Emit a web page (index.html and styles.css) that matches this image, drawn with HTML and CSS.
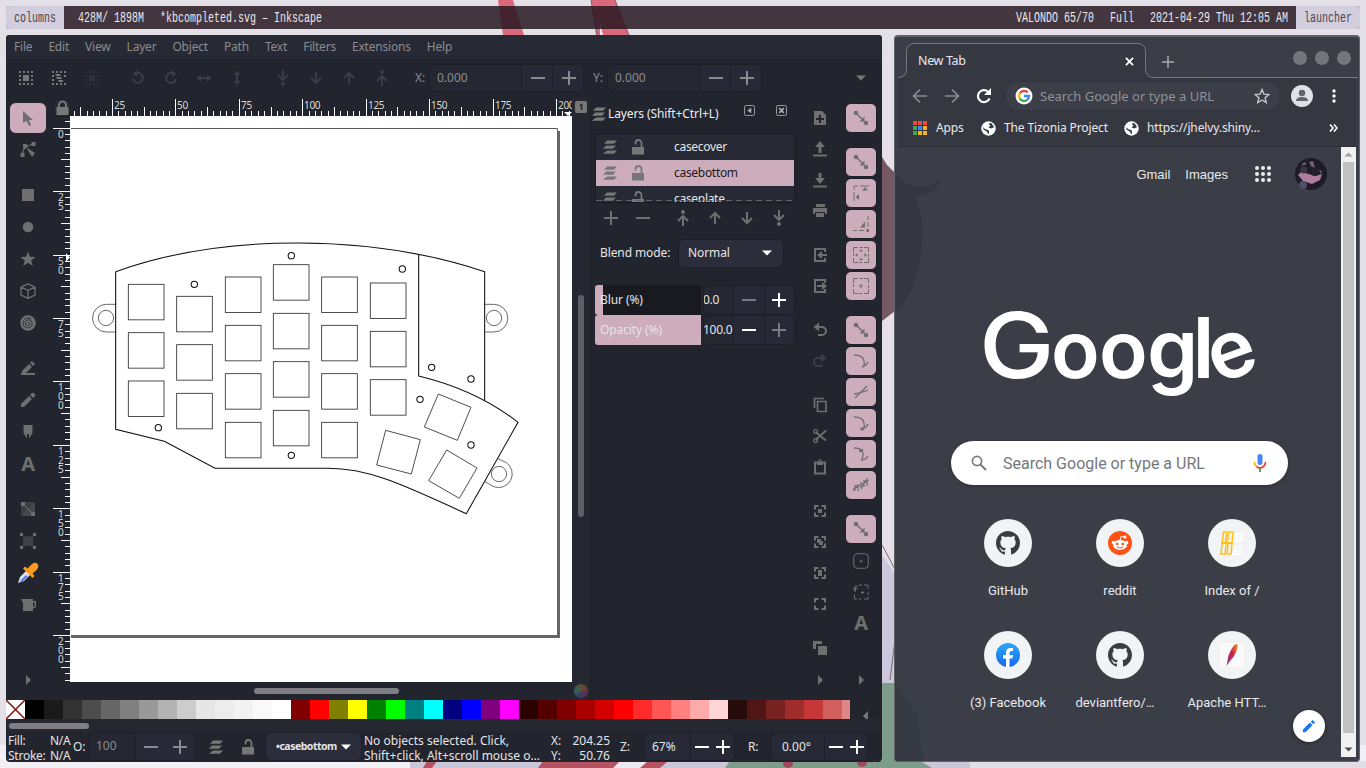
FILE: index.html
```html
<!DOCTYPE html>
<html lang="en">
<head>
<meta charset="utf-8">
<title>Desktop</title>
<link rel="stylesheet" href="styles.css">
</head>
<body>
<svg class="defs" width="0" height="0">
  <symbol id="selall" viewBox="0 0 16 16"><path fill="currentColor" d="M5 5h6v6H5zM1 1h2v2H1zM5 1h2v2H5zM9 1h2v2H9zM13 1h2v2h-2zM1 5h2v2H1zM1 9h2v2H1zM1 13h2v2H1zM5 13h2v2H5zM9 13h2v2H9zM13 13h2v2h-2zM13 9h2v2h-2zM13 5h2v2h-2z"/></symbol>
  <symbol id="sellay" viewBox="0 0 16 16"><path fill="currentColor" d="M4 4h5l1 2H5zM5 7h5l1 2H6zM7 10h5v2H8zM1 1h2v2H1zM5 1h2v2H5zM9 1h2v2H9zM13 1h2v2h-2zM1 5h2v2H1zM1 9h2v2H1zM1 13h2v2H1zM5 13h2v2H5zM9 13h2v2H9zM13 13h2v2h-2zM13 5h2v2h-2z"/></symbol>
  <symbol id="rotl" viewBox="0 0 16 16"><path d="M5 3.800a5 5 0 1 1-2 5.200" fill="none" stroke="currentColor" stroke-width="2"/><path d="M7 0v7L2.500 4z" fill="currentColor"/></symbol>
  <symbol id="rotr" viewBox="0 0 16 16"><path d="M11 3.800a5 5 0 1 0 2 5.200" fill="none" stroke="currentColor" stroke-width="2"/><path d="M9 0v7l4.500-3z" fill="currentColor"/></symbol>
  <symbol id="fliph" viewBox="0 0 16 16"><path d="M4 8h8" stroke="currentColor" stroke-width="2"/><path d="M5 4.500v7L.5 8zM11 4.500v7L15.500 8z" fill="currentColor"/></symbol>
  <symbol id="flipv" viewBox="0 0 16 16"><path d="M8 4v8" stroke="currentColor" stroke-width="2"/><path d="M4.500 5h7L8 .5zM4.500 11h7L8 15.500z" fill="currentColor"/></symbol>
  <symbol id="down" viewBox="0 0 16 16"><path d="M8 2v11M3 8l5 5 5-5" fill="none" stroke="currentColor" stroke-width="2"/></symbol>
  <symbol id="up" viewBox="0 0 16 16"><path d="M8 14V3M3 8l5-5 5 5" fill="none" stroke="currentColor" stroke-width="2"/></symbol>
  <symbol id="bottom" viewBox="0 0 16 16"><path d="M8 0v10M3 5l5 5 5-5" fill="none" stroke="currentColor" stroke-width="2"/><circle cx="8" cy="14" r="2" fill="currentColor"/></symbol>
  <symbol id="top" viewBox="0 0 16 16"><path d="M8 16V6M3 11l5-5 5 5" fill="none" stroke="currentColor" stroke-width="2"/><circle cx="8" cy="2" r="2" fill="currentColor"/></symbol>
  <symbol id="plus" viewBox="0 0 16 16"><path d="M1 8h14M8 1v14" stroke="currentColor" stroke-width="2"/></symbol>
  <symbol id="minus" viewBox="0 0 16 16"><path d="M1 8h14" stroke="currentColor" stroke-width="2"/></symbol>
  <symbol id="arrow" viewBox="0 0 16 16"><path d="M3 1l10 9H9l2 5-2 1-2.500-5L3 13z" fill="currentColor"/></symbol>
  <symbol id="node" viewBox="0 0 16 16"><path d="M2.500 13C2.500 8 4 3 14 2.500" fill="none" stroke="currentColor" stroke-width="1.200"/><path d="M.5 11h4v4h-4zM3 2h4v4H3zM11.500 0h4v4h-4z" fill="currentColor"/><path d="M6 5l9 6-3 4z" fill="currentColor"/></symbol>
  <symbol id="rect" viewBox="0 0 16 16"><path d="M2 2h12v12H2z" fill="currentColor"/></symbol>
  <symbol id="circ" viewBox="0 0 16 16"><circle cx="8" cy="8" r="5.200" fill="currentColor"/></symbol>
  <symbol id="star" viewBox="0 0 16 16"><path d="M8 .5l2 5.300 5.600.1-4.400 3.500 1.600 5.600L8 11.800 3.200 15l1.600-5.600L.4 5.900 6 5.800z" fill="currentColor"/></symbol>
  <symbol id="cube" viewBox="0 0 16 16"><path d="M8 .8l7 3.400v8L8 15.400 1 12.200v-8zM1 4.200l7 3.200 7-3.200M8 7.400v8" fill="none" stroke="currentColor" stroke-width="1.300"/></symbol>
  <symbol id="spiral" viewBox="0 0 16 16"><circle cx="8" cy="8" r="7.800" fill="currentColor"/><path d="M8 8c1-1 2.500.5 1 2-2 1.500-5-1-3-4C8 3.500 13 5 12 10c-1.500 4-9 4-9-2 0-4 4-6 8-4.500" fill="none" stroke="#22252e" stroke-width=".8"/></symbol>
  <symbol id="pencil" viewBox="0 0 16 16"><path d="M1 12l8-8 3 3-8 8H1zM10 3l2-2q1-.7 2 .3l.7.7q1 1 .3 2l-2 2z" fill="currentColor"/></symbol>
  <symbol id="pen2" viewBox="0 0 16 16"><path d="M2 11l7-7 3 3-6 6H2zM10 3l2-2 3 3-2 2zM1 13h14v2H1z" fill="currentColor"/></symbol>
  <symbol id="calli" viewBox="0 0 16 16"><path d="M3.500 1h9v8L9 14.500V10H7v4.500L3.500 9z" fill="currentColor"/></symbol>
  <symbol id="grad" viewBox="0 0 16 16"><path d="M1 1h14v14H1z" fill="#3d3e43"/><path d="M1 15L15 1v14z" fill="#48494d"/><path d="M3 3l10 10" stroke="currentColor"/><path d="M1 1h4v4H1zM11 11h4v4h-4z" fill="currentColor"/></symbol>
  <symbol id="mesh" viewBox="0 0 16 16"><path d="M2 2q6 3 12 0-2 6 0 12-6-3-12 0 3-6 0-12" fill="#414247"/><path d="M0 0h3v3H0zM13 0h3v3h-3zM0 13h3v3H0zM13 13h3v3h-3z" fill="currentColor"/></symbol>
  <symbol id="bucket" viewBox="0 0 16 16"><path d="M1 2h12v2h3v5q0 2-3 2v3H3V6zM13 5.500v4h1.500v-4z" fill="currentColor" fill-rule="evenodd"/></symbol>
  <symbol id="tri" viewBox="0 0 16 16"><path d="M6 3l5 5-5 5z" fill="currentColor"/></symbol>
  <symbol id="tril" viewBox="0 0 16 16"><path d="M10 3L5 8l5 5z" fill="currentColor"/></symbol>
  <symbol id="trid" viewBox="0 0 16 16"><path d="M3 5.500h10l-5 5z" fill="currentColor"/></symbol>
  <symbol id="layers" viewBox="0 0 16 16"><path d="M5 1.500h10l-3 3.200H2zM4 6.500h10l-3 3.200H1zM5 11.500h10l-3 3.200H1z" fill="currentColor"/></symbol>
  <symbol id="unlock" viewBox="0 0 16 16"><path d="M2 8h12v7.500H2z" fill="currentColor"/><path d="M11.500 8V4a3 3 0 0 0-6 0v1.500" fill="none" stroke="currentColor" stroke-width="1.800"/></symbol>
  <symbol id="lock" viewBox="0 0 16 16"><path d="M2 7h12v8H2z" fill="currentColor"/><path d="M4.500 8V5a3.500 3.500 0 0 1 7 0v3" fill="none" stroke="currentColor" stroke-width="2"/></symbol>
  <symbol id="newdoc" viewBox="0 0 16 16"><path d="M2 1h8l4 4v10H2zM7 5v3H4v2h3v3h2v-3h3V8H9V5z" fill="currentColor" fill-rule="evenodd"/></symbol>
  <symbol id="export" viewBox="0 0 16 16"><path d="M8 0l5 6H9.500v6h-3V6H3zM1 13.500h14V15.500H1z" fill="currentColor"/></symbol>
  <symbol id="save" viewBox="0 0 16 16"><path d="M8 12l5-6H9.500V1h-3v5H3zM1 13.500h14V15.500H1z" fill="currentColor"/></symbol>
  <symbol id="print" viewBox="0 0 16 16"><path d="M4 1h9v3H4zM1 5h14v6h-2V9H3v2H1zM4 10h8v4H4z" fill="currentColor"/></symbol>
  <symbol id="imp" viewBox="0 0 16 16"><path d="M13 5V2H3v12h10v-3" fill="none" stroke="currentColor" stroke-width="2"/><path d="M5 8l5-4v3h5v2h-5v3z" fill="currentColor"/></symbol>
  <symbol id="exp" viewBox="0 0 16 16"><path d="M13 5V2H3v12h10v-3" fill="none" stroke="currentColor" stroke-width="2"/><path d="M15 8l-5-4v3H5v2h5v3z" fill="currentColor"/></symbol>
  <symbol id="undo" viewBox="0 0 16 16"><path d="M3 5h7a4 4 0 0 1 0 8H6" fill="none" stroke="currentColor" stroke-width="2"/><path d="M7 .5v9L1.500 5z" fill="currentColor"/></symbol>
  <symbol id="redo" viewBox="0 0 16 16"><path d="M13 5H6a4 4 0 0 0 0 8h4" fill="none" stroke="currentColor" stroke-width="2"/><path d="M9 .5v9L14.500 5z" fill="currentColor"/></symbol>
  <symbol id="copy" viewBox="0 0 16 16"><path d="M2.500 11V1.500H12M5.500 4.500h8.500v10H5.500z" fill="none" stroke="currentColor" stroke-width="1.700"/></symbol>
  <symbol id="cut" viewBox="0 0 16 16"><path d="M4 4.500l10 8M4 11.500l10-9" stroke="currentColor" stroke-width="1.800"/><circle cx="3.500" cy="3.500" r="1.900" fill="none" stroke="currentColor" stroke-width="1.300"/><circle cx="3.500" cy="12.500" r="1.900" fill="none" stroke="currentColor" stroke-width="1.300"/></symbol>
  <symbol id="paste" viewBox="0 0 16 16"><path d="M3 3.500h10v11H3z" fill="none" stroke="currentColor" stroke-width="2"/><path d="M5 3h6v3H5z" fill="currentColor"/><circle cx="8" cy="2" r="1.400" fill="none" stroke="currentColor"/></symbol>
  <symbol id="zoombr" viewBox="0 0 16 16"><path d="M6.500 3H3v3.500M9.500 3H13v3.500M6.500 13H3V9.500M9.500 13H13V9.500" fill="none" stroke="currentColor" stroke-width="2"/></symbol>
  <symbol id="zoomsel" viewBox="0 0 16 16"><use href="#zoombr"/><path d="M6 6h4v4H6z" fill="currentColor"/></symbol>
  <symbol id="zoomdraw" viewBox="0 0 16 16"><use href="#zoombr"/><path d="M5 5h4v2h2v4H7V9H5z" fill="currentColor"/></symbol>
  <symbol id="zoompage" viewBox="0 0 16 16"><use href="#zoombr"/><path d="M6 5h4v6H6z" fill="currentColor"/></symbol>
  <symbol id="dup" viewBox="0 0 16 16"><path d="M1 1h9v3H4v5H1zM6 6h9v9H6z" fill="currentColor"/></symbol>
  <symbol id="snap" viewBox="0 0 16 16"><circle cx="3" cy="3" r="2.300" fill="currentColor"/><circle cx="13" cy="13" r="2.300" fill="currentColor"/><path d="M3 3l8 8" stroke="currentColor" stroke-width="1.400"/><path d="M11.500 6.500v5h-5z" fill="currentColor"/></symbol>
  <symbol id="sbox" viewBox="0 0 16 16"><path d="M1 15.500V7M1 5V1h4M7 1h9" fill="none" stroke="currentColor"/><path d="M9 5.500h6l-3-3.500zM6 9v6L2.500 12z" fill="currentColor"/></symbol>
  <symbol id="scorner" viewBox="0 0 16 16"><path d="M15 0v4M15 6v5M0 14.500h4M6 14.500h5" fill="none" stroke="currentColor"/><path d="M7 11.500h5v-6zM13.500 13h3v3h-3z" fill="currentColor"/></symbol>
  <symbol id="sdash" viewBox="0 0 16 16"><path d="M.5 5V.5H5M7 .5h3M11 .5h4.500V5M15.500 7v3M15.500 11v4.500H11M9 15.500H6M5 15.500H.5V11M.5 9V6" fill="none" stroke="currentColor"/></symbol>
  <symbol id="smid" viewBox="0 0 16 16"><use href="#sdash"/><path d="M8 2l2 2.500H6zM8 14l2-2.500H6zM2 8l2.500-2v4zM14 8l-2.500-2v4z" fill="currentColor"/></symbol>
  <symbol id="scent" viewBox="0 0 16 16"><use href="#sdash"/><path d="M6 8h4M8 6v4" stroke="currentColor"/></symbol>
  <symbol id="scurve" viewBox="0 0 16 16"><path d="M1 2q9 0 10 6t-2 6q4-1 6-5" fill="none" stroke="currentColor" stroke-width="1.300"/></symbol>
  <symbol id="scross" viewBox="0 0 16 16"><path d="M1 10q8-1 14-4M2 14L14 2" fill="none" stroke="currentColor" stroke-width="1.300"/></symbol>
  <symbol id="scusp" viewBox="0 0 16 16"><use href="#scurve"/><path d="M7.500 12.500h3v3h-3z" fill="currentColor"/></symbol>
  <symbol id="ssmooth" viewBox="0 0 16 16"><path d="M1 2q9 0 9 6 0 5-2 6 5 0 7-4" fill="none" stroke="currentColor" stroke-width="1.300"/><path d="M6 3h4v3H6z" fill="currentColor"/></symbol>
  <symbol id="sline" viewBox="0 0 16 16"><path d="M0 12l6-3 3-2 7-4M2 8v6M5 7v7M8 5v6M11 3v7M14 1v8M0 14L4 8M8 12l5-9" fill="none" stroke="currentColor" stroke-width="1.200"/></symbol>
  <symbol id="sround" viewBox="0 0 16 16"><rect x=".7" y=".7" width="14.600" height="14.600" rx="3.500" fill="none" stroke="currentColor"/><path d="M6.500 8h3M8 6.500v3" stroke="currentColor"/></symbol>
  <symbol id="srot" viewBox="0 0 16 16"><path d="M6 1h3M11 1h4v4M15 8v3M15 13v2h-4M8 15H6M4 15H1.500v-4M2 8V2h3" fill="none" stroke="currentColor"/><path d="M0 4h4.500L2 7.500zM8 8h3v1H8z" fill="currentColor"/><path d="M9.500 7v3" stroke="currentColor"/></symbol>
  <symbol id="github" viewBox="0 0 16 16"><path fill="#383d42" d="M8 0C3.580 0 0 3.580 0 8c0 3.540 2.290 6.530 5.470 7.590.4.070.55-.17.55-.38 0-.19-.01-.82-.01-1.490-2.010.37-2.530-.49-2.690-.94-.09-.23-.48-.94-.82-1.130-.28-.15-.68-.52-.01-.53.63-.01 1.080.58 1.230.82.720 1.210 1.870.87 2.330.66.070-.52.280-.87.510-1.070-1.780-.2-3.640-.89-3.640-3.950 0-.87.310-1.590.82-2.150-.08-.2-.36-1.020.08-2.120 0 0 .67-.21 2.200.82.640-.18 1.320-.27 2-.27s1.360.09 2 .27c1.530-1.040 2.200-.82 2.200-.82.440 1.100.160 1.920.080 2.120.51.560.82 1.270.82 2.150 0 3.070-1.870 3.750-3.650 3.950.290.250.540.730.540 1.480 0 1.070-.01 1.930-.01 2.200 0 .21.150.46.550.38A8.010 8.010 0 0 0 16 8c0-4.420-3.580-8-8-8z"/></symbol>
  <symbol id="globe" viewBox="0 0 16 16"><circle cx="8" cy="8" r="7.700" fill="#fff"/><path d="M2.500 6q1 3 4 3l2 1.500v3.500q-2-.5-2-2.500L2.500 9zM8 3l3-1 3 4.500-3 1.500-3-1 2-2z" fill="#373942"/></symbol>
</svg>
<div class="desktop">
  <svg class="wallpaper" width="1366" height="768" viewBox="0 0 1366 768">
    <path d="M0 745h1366v23H0z" fill="#f1f0f4"/>
    <path d="M498 0h15l11 35h-21zM591 0h24l14 35h-33z" fill="#d9697b"/>
    <path d="M591 0l6 35M615 0l14 35" stroke="#85606a" fill="none"/>
    <path d="M600 22l3 13h-3z" fill="#f5e8ee"/>
    <path d="M882 157l5 8 8 8v138l-13 10z" fill="#755863"/>
    <path d="M896 175q20 22 44 4-4 16-26 18 16 22 3 78-8 26-21 36z" fill="#6a626e"/>
    <path d="M882 555l14 20v110h-14z" fill="#cbc7dc"/>
    <path d="M882 545l14 26M895 640l-5 40" stroke="#766a73" fill="none"/>
    <path d="M882 683h14l20 30 10 55h-44z" fill="#7d9c8a"/>
    <path d="M410 761h560v7H410z" fill="#cbc7d8"/>
    <path d="M427 761h10l-5 7h-9zM543 761h125l-8 7H538z" fill="#b55363"/>
    <path d="M620 761h28l-8 7h-27z" fill="#eceaf0"/>
    <path d="M730 761h190l12 7H725z" fill="#7d9c8a"/>
    <circle cx="788" cy="763" r="5" fill="#9b4a58"/><circle cx="862" cy="762" r="5" fill="#9b4a58"/>
    <path d="M970 761h396v7H970z" fill="#e1dee5"/>
  </svg>
  <header class="bar">
    <span class="cap"><svg width="58" height="22"><text x="8" y="16" textLength="42" lengthAdjust="spacingAndGlyphs">columns</text></svg></span>
    <svg class="bar-l" width="300" height="22"><text x="14" y="16" textLength="66" lengthAdjust="spacingAndGlyphs">428M/ 1898M</text><text x="96" y="16" textLength="162" lengthAdjust="spacingAndGlyphs">*kbcompleted.svg – Inkscape</text></svg>
    <svg class="bar-r" width="290" height="22"><text x="10" y="16" textLength="78" lengthAdjust="spacingAndGlyphs">VALONDO 65/70</text><text x="104" y="16" textLength="24" lengthAdjust="spacingAndGlyphs">Full</text><text x="144" y="16" textLength="138" lengthAdjust="spacingAndGlyphs">2021-04-29 Thu 12:05 AM</text></svg>
    <span class="cap end"><svg width="64" height="22"><text x="8" y="16" textLength="48" lengthAdjust="spacingAndGlyphs">launcher</text></svg></span>
  </header>
  <main class="windows">
    <section class="ink">
      <nav class="menu"><span>File</span><span>Edit</span><span>View</span><span>Layer</span><span>Object</span><span>Path</span><span>Text</span><span>Filters</span><span>Extensions</span><span>Help</span></nav>
      <div class="tools">
        <div class="tgroup"><i><svg><use href="#selall"/></svg></i><i><svg><use href="#sellay"/></svg></i><i class="off2"><svg><use href="#selall"/></svg></i></div>
        <div class="tgroup off"><i><svg><use href="#rotl"/></svg></i><i><svg><use href="#rotr"/></svg></i><i><svg><use href="#fliph"/></svg></i><i><svg><use href="#flipv"/></svg></i></div>
        <div class="tgroup off"><i><svg><use href="#bottom"/></svg></i><i><svg><use href="#down"/></svg></i><i><svg><use href="#up"/></svg></i><i><svg><use href="#top"/></svg></i></div>
        <label class="lx">X:</label><div class="spin w155"><b>0.000</b><i><svg><use href="#minus"/></svg></i><i><svg><use href="#plus"/></svg></i></div>
        <label class="ly">Y:</label><div class="spin w155"><b>0.000</b><i><svg><use href="#minus"/></svg></i><i><svg><use href="#plus"/></svg></i></div>
        <svg class="more"><use href="#trid"/></svg>
      </div>
      <div class="work">
        <aside class="toolbox">
          <i class="sel"><svg><use href="#arrow"/></svg></i><i><svg><use href="#node"/></svg></i>
          <i class="gap"><svg><use href="#rect"/></svg></i><i><svg><use href="#circ"/></svg></i><i><svg><use href="#star"/></svg></i><i><svg><use href="#cube"/></svg></i><i><svg><use href="#spiral"/></svg></i>
          <i class="gap"><svg><use href="#pen2"/></svg></i><i><svg><use href="#pencil"/></svg></i><i><svg><use href="#calli"/></svg></i><i class="glyph">A</i>
          <i class="gap"><svg><use href="#grad"/></svg></i><i><svg><use href="#mesh"/></svg></i>
          <i><svg class="dropper" viewBox="0 0 22 22"><path d="M1 21l2-6 7-7 4 4-7 7z" fill="#e6e2e4"/><path d="M2.500 19.500L9 13l1.500 1.500-5 5z" fill="#4c7cf0"/><path d="M6 6.500l9.500 9.500 2-2-2-2.500 4-3.500q3-3.500 1-6-2.500-2.500-6 .5l-4 4L8 4.500z" fill="#fd9a1d"/></svg></i>
          <i><svg><use href="#bucket"/></svg></i><i class="expand"><svg><use href="#tri"/></svg></i>
        </aside>
        <div class="canvas">
          <svg id="rulers" width="522" height="602" viewBox="50 98 522 602">
            <rect x="70" y="116" width="502" height="566" fill="#fff"/>
            <path d="M71 128.500h486.500V635" fill="none" stroke="#5a5a5a"/><path d="M557 131h3v507H71v-3h486z" fill="#666"/>
            <g id="ticks" fill="#fff"></g><g id="labels" class="ruler"></g>
            <path d="M564 112h8l-4 4zM66 253v9l4-4.500z" fill="#fff"/>
            <rect x="53.500" y="99.500" width="17" height="17" rx="5" fill="#272a36" stroke="#1c1f27"/>
            <svg x="54.500" y="100" width="14" height="15" color="#777"><use href="#lock"/></svg>
            <rect x="254" y="688" width="145" height="6" rx="3" fill="#7e7e84"/>
            <g id="board" transform="translate(80 230) scale(.33333)" fill="none" stroke="#111" stroke-width="3.200">
              <g stroke-width="2.200" stroke="#333"><path d="M107 223H79a41 41 0 0 0 0 83h28M1214 223h28a41 41 0 0 1 0 83h-28M1254 686l25 12a41 41 0 0 1-38 72l-26-15"/><circle cx="78" cy="264" r="23"/><circle cx="1242" cy="264" r="23"/><circle cx="1257" cy="732" r="23"/></g>
              <path d="M107 125Q350 38 655 39T1214 125V512M107 125V598L253 634 405 715H745C880 715 1000 780 1159 851L1314 577Q1190 480 1016 438V75"/>
              <g id="keys" stroke="#333" stroke-width="2.600"><path d="M1075 492l98 40-41 99-99-40zM917 601l104 28-27 103-104-27zM1100 660l91 54-53 91-92-53z"/></g>
              <g id="holes"></g>
            </g>
          </svg>
        </div>
        <div class="vscroll"><span class="one"><em>1</em></span><span class="thumb"></span><span class="wheel"></span></div>
        <div class="dock">
          <div class="dhead"><svg><use href="#layers"/></svg><span>Layers (Shift+Ctrl+L)</span><svg class="hb" viewBox="0 0 12 12"><rect x=".5" y=".5" width="11" height="11" rx="2" fill="none" stroke="currentColor"/><path d="M8 3v6L3.500 6z" fill="currentColor"/></svg><svg class="hb hb2" viewBox="0 0 12 12"><rect x=".5" y=".5" width="11" height="11" rx="2" fill="none" stroke="currentColor"/><path d="M3.500 3.500l5 5m0-5l-5 5" stroke="currentColor" stroke-width="2"/></svg></div>
          <div class="panel">
            <div class="list">
              <div class="row"><svg><use href="#layers"/></svg><svg><use href="#unlock"/></svg><span>casecover</span></div>
              <div class="row on"><svg><use href="#layers"/></svg><svg><use href="#unlock"/></svg><span>casebottom</span></div>
              <div class="row"><svg><use href="#layers"/></svg><svg><use href="#unlock"/></svg><span>caseplate</span></div>
            </div>
            <div class="lbtns"><i><svg><use href="#plus"/></svg></i><i class="g8"><svg><use href="#minus"/></svg></i><i><svg><use href="#top"/></svg></i><i><svg><use href="#up"/></svg></i><i><svg><use href="#down"/></svg></i><i><svg><use href="#bottom"/></svg></i></div>
            <div class="blend"><span>Blend mode:</span><div class="select"><span>Normal</span><svg><use href="#trid"/></svg></div></div>
            <div class="slide"><div class="track"><span>Blur (%)</span></div><div class="spin s2"><b>0.0</b><i class="dim"><svg><use href="#minus"/></svg></i><i><svg><use href="#plus"/></svg></i></div></div>
            <div class="slide"><div class="track full"><span>Opacity (%)</span></div><div class="spin s2"><b>100.0</b><i><svg><use href="#minus"/></svg></i><i class="dim"><svg><use href="#plus"/></svg></i></div></div>
          </div>
        </div>
        <aside class="cmds">
          <i><svg><use href="#newdoc"/></svg></i><i><svg><use href="#export"/></svg></i><i><svg><use href="#save"/></svg></i><i><svg><use href="#print"/></svg></i>
          <i class="gap"><svg><use href="#imp"/></svg></i><i><svg><use href="#exp"/></svg></i>
          <i class="gap"><svg><use href="#undo"/></svg></i><i class="faint"><svg><use href="#redo"/></svg></i>
          <i class="gap"><svg><use href="#copy"/></svg></i><i><svg><use href="#cut"/></svg></i><i><svg><use href="#paste"/></svg></i>
          <i class="gap"><svg><use href="#zoomsel"/></svg></i><i><svg><use href="#zoomdraw"/></svg></i><i><svg><use href="#zoompage"/></svg></i><i><svg><use href="#zoombr"/></svg></i>
          <i class="gap"><svg><use href="#dup"/></svg></i><i class="expand"><svg><use href="#tri"/></svg></i>
        </aside>
        <aside class="snaps">
          <i class="p"><svg><use href="#snap"/></svg></i>
          <i class="p gap"><svg><use href="#snap"/></svg></i><i class="p"><svg><use href="#sbox"/></svg></i><i class="p"><svg><use href="#scorner"/></svg></i><i class="p"><svg><use href="#smid"/></svg></i><i class="p"><svg><use href="#scent"/></svg></i>
          <i class="p gap"><svg><use href="#snap"/></svg></i><i class="p"><svg><use href="#scurve"/></svg></i><i class="p"><svg><use href="#scross"/></svg></i><i class="p"><svg><use href="#scusp"/></svg></i><i class="p"><svg><use href="#ssmooth"/></svg></i><i class="p"><svg><use href="#sline"/></svg></i>
          <i class="p gap"><svg><use href="#snap"/></svg></i><i><svg><use href="#sround"/></svg></i><i><svg><use href="#srot"/></svg></i><i class="glyph">A</i><i class="expand s"><svg><use href="#tri"/></svg></i>
        </aside>
      </div>
      <div class="palette"><svg class="none" width="19" height="19"><path d="M0 0h19v19H0z" fill="#fff"/><path d="M0 0l19 19M19 0L0 19" stroke="#7b1113" stroke-width="1.500"/></svg><div id="swatches"></div><svg class="pl"><use href="#tril"/></svg></div>
      <div class="pscroll"><span></span></div>
      <footer class="status">
        <div class="fs"><span>Fill:</span><span>N/A</span><span>Stroke:</span><span>N/A</span></div>
        <label class="o">O:</label>
        <div class="spin op"><b>100</b><i><svg><use href="#minus"/></svg></i><i><svg><use href="#plus"/></svg></i></div>
        <svg class="sl"><use href="#layers"/></svg><svg class="sk"><use href="#unlock"/></svg>
        <div class="select cur"><strong>•casebottom</strong><svg><use href="#trid"/></svg></div>
        <div class="msg">No objects selected. Click,<br>Shift+click, Alt+scroll mouse o…</div>
        <div class="xy"><span>X:</span><span>204.25</span><span>Y:</span><span>50.76</span></div>
        <label class="z">Z:</label><div class="spin lit zf"><b>67%</b><i><svg><use href="#minus"/></svg></i><i><svg><use href="#plus"/></svg></i></div>
        <label class="r">R:</label><div class="spin lit rf"><b>0.00°</b><i><svg><use href="#minus"/></svg></i><i><svg><use href="#plus"/></svg></i></div>
      </footer>
    </section>
    <section class="chrome">
      <div class="tabs">
        <svg class="outline" width="460" height="43"><path d="M-1 78V42.500q9.500 0 9.500-8V17q0-8.500 8.500-8.500h222q8.500 0 8.500 8.500v17q0 8.500 8.500 8.500h205V78z" fill="#363841" stroke="#777980"/></svg>
        <span class="title">New Tab</span>
        <svg class="x" viewBox="0 0 10 10"><path d="M1 1l8 8m0-8L1 9" stroke="#fff" stroke-width="2"/></svg>
        <svg class="add" viewBox="0 0 12 12"><path d="M0 6h12M6 0v12" stroke="#a8a9ad" stroke-width="1.500"/></svg>
        <div class="dots"><u></u><u></u><u></u></div>
      </div>
      <div class="nav">
        <svg class="nb" viewBox="0 0 16 16"><path d="M15 8H2M8 1.500L1.500 8 8 14.500" fill="none" stroke="#8b8c91" stroke-width="1.700"/></svg>
        <svg class="nb" viewBox="0 0 16 16"><path d="M1 8h13M8 1.500L14.500 8 8 14.500" fill="none" stroke="#8b8c91" stroke-width="1.700"/></svg>
        <svg class="nb last" viewBox="0 0 16 16"><path d="M13.500 10.500A6 6 0 1 1 12 3.700" fill="none" stroke="#fff" stroke-width="2.200"/><path d="M15 0v7H8z" fill="#fff"/></svg>
        <div class="omni"><svg class="g" viewBox="0 0 18 18"><circle cx="9" cy="9" r="8.500" fill="#fff"/><g fill="none" stroke-width="2.300"><path d="M12.800 5.600A5 5 0 0 0 4.700 6.500" stroke="#ea4335"/><path d="M4.700 6.500a5 5 0 0 0 0 5" stroke="#fbbc05"/><path d="M4.700 11.500a5 5 0 0 0 7.500 1.300" stroke="#34a853"/><path d="M12.200 12.800A5 5 0 0 0 14 9H9" stroke="#4285f4"/></g></svg><span>Search Google or type a URL</span><svg class="star" viewBox="0 0 16 16"><path d="M8 1.600l1.900 4.500 4.900.4-3.700 3.200 1.100 4.800L8 12l-4.200 2.500 1.100-4.800L1.200 6.500l4.900-.4z" fill="none" stroke="#c6c7cb" stroke-width="1.400"/></svg></div>
        <svg class="user" viewBox="0 0 22 22"><circle cx="11" cy="11" r="11" fill="#dfe1e6"/><circle cx="11" cy="8" r="3.200" fill="#5e6470"/><path d="M5 16q0-4 6-4t6 4z" fill="#5e6470"/></svg>
        <svg class="kebab" viewBox="0 0 4 14"><circle cx="2" cy="2" r="1.700"/><circle cx="2" cy="7" r="1.700"/><circle cx="2" cy="12" r="1.700"/></svg>
      </div>
      <div class="marks">
        <svg class="apps" viewBox="0 0 14 14"><path d="M0 0h4v4H0zM5 0h4v4H5zM10 0h4v4h-4z" fill="#f0483e"/><path d="M0 5h4v4H0zM0 10h4v4H0z" fill="#3ba55a"/><path d="M5 5h4v4H5z" fill="#3b8df5"/><path d="M10 5h4v4h-4zM5 10h4v4H5zM10 10h4v4h-4z" fill="#f6b21b"/></svg><span class="m1">Apps</span>
        <svg class="gl"><use href="#globe"/></svg><span class="m2">The Tizonia Project</span>
        <svg class="gl"><use href="#globe"/></svg><span class="m3">https://jhelvy.shiny…</span><svg class="raq" viewBox="0 0 9 8"><path d="M1 .5L4 4 1 7.500M5 .5L8 4 5 7.500" fill="none" stroke="#fff" stroke-width="1.600"/></svg>
      </div>
      <div class="page">
        <div class="content">
          <div class="gtop"><span>Gmail</span><span>Images</span><svg class="waffle" viewBox="0 0 16 16" fill="#eee"><circle cx="2" cy="2" r="2"/><circle cx="8" cy="2" r="2"/><circle cx="14" cy="2" r="2"/><circle cx="2" cy="8" r="2"/><circle cx="8" cy="8" r="2"/><circle cx="14" cy="8" r="2"/><circle cx="2" cy="14" r="2"/><circle cx="8" cy="14" r="2"/><circle cx="14" cy="14" r="2"/></svg><svg class="ava" viewBox="0 0 32 32"><circle cx="16" cy="16" r="16" fill="#1d1b27"/><path d="M3 17l3-3 8 2 6 2 7-2-2 6-8 4-9-3z" fill="#b07d9d"/><path d="M6 8l3-4 3 2zM14 4l4-1 2 7-4-2zM24 12l3 1-1 3z" fill="#7d5a78"/><circle cx="9" cy="12" r="3.500" fill="#3e3549"/><circle cx="20" cy="14" r="4" fill="#23212e"/><circle cx="8" cy="27" r="4" fill="#4c4f68"/></svg></div>
          <svg class="logo" width="290" height="110" viewBox="0 0 290 110"><text class="cg" transform="translate(4 78) scale(1.110 1)">G</text><text y="78"><tspan x="76 124">oo</tspan><tspan x="172" class="cg2">g</tspan><tspan x="217.500" class="cl">l</tspan><tspan x="242.500" y="84" rotate="-20">e</tspan></text></svg>
          <div class="search"><svg class="mag" viewBox="0 0 16 16"><circle cx="6" cy="6" r="4.600" fill="none" stroke="#75787c" stroke-width="1.700"/><path d="M9.500 9.500l5.500 5.500" stroke="#75787c" stroke-width="2"/></svg><span>Search Google or type a URL</span><svg class="mic" viewBox="0 0 14 20"><rect x="4.500" y="1" width="5" height="11" rx="2.500" fill="#4b86f5"/><path d="M1.500 9q0 3 2 4.500" fill="none" stroke="#fbbc05" stroke-width="1.800"/><path d="M3.500 13.500Q7 16.500 10.500 13.500 12.500 12 12.500 9" fill="none" stroke="#ea4335" stroke-width="1.800"/><path d="M7 15.500V19" stroke="#34a853" stroke-width="1.800"/></svg></div>
          <div class="tiles">
            <div class="tile"><em><svg><use href="#github"/></svg></em><span>GitHub</span></div>
            <div class="tile"><em><svg viewBox="0 0 24 24"><circle cx="12" cy="12" r="12" fill="#ff5216"/><ellipse cx="12" cy="14" rx="7" ry="5" fill="#fff"/><circle cx="5.500" cy="11.500" r="1.800" fill="#fff"/><circle cx="18.500" cy="11.500" r="1.800" fill="#fff"/><circle cx="17" cy="6" r="1.500" fill="#fff"/><path d="M12 9.500l1-4 3.500.6" fill="none" stroke="#fff"/><circle cx="9.300" cy="13" r="1.300" fill="#ff5216"/><circle cx="14.700" cy="13" r="1.300" fill="#ff5216"/><path d="M9 16q3 2 6 0" fill="none" stroke="#ff5216"/></svg></em><span>reddit</span></div>
            <div class="tile"><em><svg viewBox="0 0 24 24"><path d="M3.500 1h3L5.500 10h2l1-9h4.500l-2 22H7l1-9H6l-1 9H1z" fill="none" stroke="#fbc21b" stroke-width="1.500"/><path d="M1 12h12" stroke="#fbc21b" stroke-width="2"/><text x="14" y="11" class="bb">B</text><text x="13" y="24" class="bb">B</text></svg></em><span>Index of /</span></div>
            <div class="tile"><em><svg viewBox="0 0 24 24"><defs><linearGradient id="fb" x2="0" y2="1"><stop stop-color="#2aa9fb"/><stop offset="1" stop-color="#1769ee"/></linearGradient></defs><circle cx="12" cy="12" r="12" fill="url(#fb)"/><path d="M10 24v-8.500H7V12h3V9.500Q10 5 14.500 5H17v3h-1.500Q13.500 8 13.500 10v2H17l-.6 3.500h-2.900V24z" fill="#fff"/></svg></em><span>(3) Facebook</span></div>
            <div class="tile"><em><svg><use href="#github"/></svg></em><span class="long">deviantfero/…</span></div>
            <div class="tile"><em><svg viewBox="0 0 24 24"><defs><linearGradient id="ap" x1="1" x2="0" y2="1"><stop stop-color="#f69923"/><stop offset=".45" stop-color="#ce2344"/><stop offset="1" stop-color="#7a3a92"/></linearGradient></defs><path d="M0 0h24v24H0z" fill="#fbfafa"/><path d="M16 1q3 0 1 5-2 7-7 12L6.500 23l1-5q0-5 3-10 3-6 5.500-7" fill="url(#ap)"/></svg></em><span class="long">Apache HTT…</span></div>
          </div>
          <div class="edit"><svg viewBox="0 0 16 16"><path d="M1 12l8-8 3 3-8 8H1zM10 3l2-2 3 3-2 2z" fill="#2079e8"/></svg></div>
        </div>
        <div class="sbar"><svg viewBox="0 0 15 15"><path d="M3.500 9.500h8l-4-4z" fill="#a0a0a0"/></svg><div></div><svg viewBox="0 0 15 15"><path d="M3.500 5.500h8l-4 4z" fill="#505050"/></svg></div>
      </div>
    </section>
  </main>
</div>
<script src="script.js"></script>
</body>
</html>
```
FILE: styles.css
```css
* { box-sizing: border-box; }
body { margin: 0; width: 1366px; height: 768px; overflow: hidden; background: #e3e0e7; font: 12px/16px "Noto Sans", sans-serif; color: #dfe0e3; }
.defs { position: absolute; }
svg { display: block; width: 16px; height: 16px; flex: none; }
i, em, u, b { font-style: normal; text-decoration: none; font-weight: 400; }
.desktop { position: relative; width: 1366px; height: 768px; padding: 6px; display: flex; flex-direction: column; gap: 7px; }
.wallpaper { position: absolute; left: 0; top: 0; width: 1366px; height: 768px; }
.bar { position: relative; height: 23px; flex: none; display: flex; background: rgba(40,24,32,.85); border-radius: 4px; }
.bar svg { width: auto; height: 22px; }
.bar text { font: 14px "Liberation Mono", monospace; fill: #eae7ec; }
.cap { background: #d2cede; border-radius: 4px 0 0 4px; }
.cap.end { border-radius: 0 4px 4px 0; }
.bar .cap text { fill: #4b4450; }
.bar-r { margin-left: auto; }
.windows { position: relative; display: flex; gap: 12px; height: 726px; margin-top: -1px; }
.ink { width: 876px; height: 727px; background: #22252e; border-radius: 4px; overflow: hidden; display: flex; flex-direction: column; color: #e4e4e6; box-shadow: inset 0 1px #1b1d25; letter-spacing: -.1px; }
.menu { height: 24px; background: #272a35; display: flex; gap: 16px; padding: 4px 8px; color: #8a8b90; flex: none; white-space: nowrap; letter-spacing: -.2px; }
.tools { height: 39px; flex: none; display: flex; align-items: center; padding: 0 0 1px 3px; color: #777; }
.tgroup { display: flex; margin-right: 13px; }
.tgroup i { width: 33px; display: flex; justify-content: center; }
.off, .off2 { color: #3b3d45; }
.off2 { opacity: .5; }
.lx { width: 14px; margin-left: 4px; color: #8a8b90; }
.ly { width: 14px; margin-left: 9px; color: #8a8b90; }
.spin { height: 28px; border: 1px solid #1d2028; border-radius: 6px; display: flex; background: #252832; color: #8a8b90; overflow: hidden; letter-spacing: 0; }
.spin b { flex: 1; padding: 5px 7px; }
.spin i { border-left: 1px solid #1d2028; width: 31px; display: flex; align-items: center; justify-content: center; background: #272a36; }
.w155 { width: 155px; }
.w155 svg { margin-left: 1px; }
.more { margin-left: 91px; }
.work { height: 602px; flex: none; display: flex; color: #6f6f6f; }
.toolbox { width: 44px; padding-top: 4px; display: flex; flex-direction: column; align-items: center; }
.toolbox i { width: 38px; height: 32px; flex: none; display: flex; align-items: center; justify-content: center; border: 1.5px solid #22252e; border-radius: 7px; }
.toolbox .gap, .cmds .gap, .snaps .gap { margin-top: 13px; }
.toolbox .sel { background: #cdadbc; }
.toolbox .dropper { width: 22px; height: 22px; }
.toolbox .expand { margin-top: 43px; }
.glyph { font: bold 20px/28px "Noto Sans", sans-serif; }
.canvas { width: 522px; background: #22252e; }
.canvas > svg { width: 522px; height: 602px; letter-spacing: 0; }
.ruler text { font: 10px "Noto Sans", sans-serif; letter-spacing: -.3px; fill: #d8d8da; }
.vscroll { width: 19px; border-right: 1px solid #1d2028; display: flex; flex-direction: column; align-items: center; padding-top: 3px; background: #252831; }
.one { width: 12px; height: 12px; background: #777; border-radius: 2px; color: #22252e; display: flex; justify-content: center; }
.one em { font-weight: 700; font-size: 9px; line-height: 12px; }
.thumb { width: 6px; height: 222px; margin-top: 182px; border-radius: 3px; background: #5d5e66; }
.wheel { width: 14px; height: 14px; margin-top: 167px; border-radius: 7px; opacity: .45; background: conic-gradient(#a08040, #c06040, #b04060, #8040a0, #4060a0, #40a090, #58a050, #a08040); }
.dock { width: 207px; }
.dhead { height: 31px; display: flex; align-items: center; color: #ececee; white-space: nowrap; font-size: 12px; }
.dhead svg { color: #7b7b7b; margin-right: 1px; }
.dhead span { width: 136px; }
.dhead .hb { width: 11px; height: 11px; color: #a8a8aa; margin: -6px 21px 0 0; }
.dhead .hb2 { margin-right: 0; }
.panel { height: 222px; border: 1px solid #1d2028; border-left: 0; padding: 3px 2px 0 4px; }
.list { height: 70px; border: 1px solid #1b1d25; background: #272a35; overflow: hidden; position: relative; }
.list::after { content: ""; position: absolute; left: 0; right: 0; bottom: 1px; height: 1px; background: repeating-linear-gradient(90deg, #62636a 0 6px, transparent 6px 10px); }
.row { height: 26px; display: flex; align-items: center; padding-left: 6px; gap: 12px; color: #e4e4e6; letter-spacing: -.3px; }
.row svg { color: #777; }
.row span { margin-left: 16px; }
.row.on { background: #cdadbc; color: #1c1a1d; }
.lbtns { display: flex; height: 29px; align-items: center; color: #6f6f6f; }
.lbtns i { width: 32px; flex: none; display: flex; justify-content: center; }
.lbtns .g8 { margin-right: 8px; }
.blend { display: flex; height: 46px; align-items: center; justify-content: space-between; padding: 0 11px 4px 5px; margin-bottom: 7px; color: #e4e4e6; }
.select { background: #2b2e3a; border: 1px solid #1c1f27; border-radius: 6px; width: 106px; height: 29px; display: flex; align-items: center; padding: 0 8px 0 9px; justify-content: space-between; color: #e4e4e6; }
.select svg { color: #fff; }
.slide { display: flex; height: 30px; gap: 2px; color: #e4e4e6; }
.track { width: 106px; height: 30px; background: linear-gradient(90deg, #cdadbc 8px, #191a1f 8px); padding: 7px 5px; border-radius: 3px 0 0 3px; }
.track.full { background: #cdadbc; }
.spin.s2 { width: 92px; height: 30px; color: #e4e4e6; flex: none; letter-spacing: -.25px; }
.s2 b { padding: 6px 0 0 0; text-indent: -1px; }
.s2 i { color: #fff; width: 30.500px; flex: none; }
.s2 .dim { color: #777a80; }
.cmds, .snaps { width: 44px; padding-top: 4px; display: flex; flex-direction: column; align-items: center; }
.snaps { width: 40px; padding: 5px 2px 0 0; }
.cmds i, .snaps i { height: 31px; width: 32px; flex: none; display: flex; align-items: center; justify-content: center; }
.snaps .p { height: 30px; width: 32px; background: #cdadbc; border: 1px solid #1d2028; border-radius: 6px; margin-bottom: 1px; }
.faint { color: #3b3d45; }
.cmds .expand { margin-top: 1px; }
.snaps .expand { margin-top: 26px; }
.palette { height: 19px; display: flex; flex: none; align-items: center; }
.palette .none { width: 19px; height: 19px; }
#swatches { display: flex; width: 825px; overflow: hidden; flex: none; }
#swatches span { width: 19px; height: 19px; flex: none; }
.pl { color: #777; margin: 12px 0 0 8px; }
.pscroll { height: 13px; flex: none; padding: 4px 3px; background: #252831; }
.pscroll span { display: block; width: 80px; height: 6px; border-radius: 3px; background: #7e7e84; }
.status { height: 30px; display: flex; align-items: center; white-space: nowrap; line-height: 15px; padding: 0 0 1px 2px; }
.status .spin, .status .select { height: 29px; flex: none; }
.fs { display: grid; grid-template-columns: 42px 23px; flex: none; width: 65px; padding-top: 2px; letter-spacing: -.25px; }
.o { width: 15px; flex: none; }
.op { width: 108px; }
.op b { padding-left: 7px; }
.op i { border-left: 0; width: 30px; }
.op i:nth-child(2) { border-left: 1px solid #1d2028; }
.sl { color: #777; margin: 0 16px 0 12px; }
.sk { color: #777; margin-right: 9px; }
.status .cur { width: 97px; padding: 0 7px 0 10px; }
.cur strong { font-size: 10.500px; letter-spacing: -.5px; }
.msg { width: 187px; padding: 2px 0 0 2px; flex: none; overflow: hidden; letter-spacing: 0; }
.xy { display: grid; grid-template-columns: 20px 39px; margin-left: 2px; flex: none; padding-top: 2px; letter-spacing: 0; }
.xy span:nth-child(even) { text-align: right; }
.z { width: 23px; margin-left: 10px; flex: none; }
.r { width: 22px; margin-left: 13px; flex: none; }
.spin.lit { color: #e4e4e6; background: #272a36; }
.lit b { padding: 6px 8px; }
.lit i { width: 22px; border-left: 0; color: #fff; }
.lit i:nth-child(2) { border-left: 1px solid #1d2028; }
.zf { width: 92px; }
.rf { width: 99px; }
.rf b { padding-left: 11px; }
.chrome { width: 466px; height: 727px; border: 1px solid #606268; border-top-width: 2px; border-radius: 4px; background: rgba(50,53,62,.95); padding: 0 3px; display: flex; flex-direction: column; font-size: 12.500px; color: #e8e9ec; overflow: hidden; }
.tabs { position: relative; height: 41px; flex: none; display: flex; align-items: center; }
.outline { position: absolute; left: 0; top: -2px; width: 460px; height: 43px; }
.tabs > :not(.outline) { position: relative; }
.title { width: 207px; padding-left: 20px; margin-top: 7px; letter-spacing: -.35px; }
.x { width: 9px; height: 9px; margin-top: 8px; margin-left: 20px; }
.add { width: 12px; height: 12px; margin: 8px 0 0 28px; }
.dots { margin-left: auto; display: flex; gap: 8px; margin-right: 5px; margin-top: 1px; }
.dots u { width: 14px; height: 14px; border-radius: 7px; background: #74767d; }
.nav, .marks { background: #363841; display: flex; align-items: center; flex: none; }
.nav { height: 37px; padding: 0 0 1px 14px; }
.nb { margin-right: 16px; width: 16px; height: 16px; }
.nb.last { margin-right: 14px; }
.omni { width: 274px; height: 28px; border-radius: 14px; background: #3c3e48; display: flex; align-items: center; padding: 0 10px 0 9px; color: #909197; font-size: 13.050px; white-space: nowrap; }
.omni .g { width: 18px; height: 18px; margin-right: 7px; }
.omni .star { margin-left: auto; }
.user { width: 22px; height: 22px; margin-left: 11px; }
.kebab { width: 4px; height: 14px; fill: #fff; margin-left: 19px; }
.marks { height: 32px; padding: 0 0 5px 15px; border-bottom: 1px solid #2e2f38; font-size: 12px; white-space: nowrap; letter-spacing: -.12px; }
.apps { width: 14px; height: 14px; margin-right: 9px; }
.m1 { width: 45px; }
.m2 { width: 120px; }
.m3 { width: 182px; }
.marks .gl { width: 15px; height: 15px; margin-right: 8px; }
.raq { width: 9px; height: 8px; }
.page { height: 614px; display: flex; }
.content { position: relative; width: 443px; }
.gtop { display: flex; height: 54px; align-items: center; justify-content: flex-end; font: 13px "Liberation Sans", sans-serif; padding-right: 14px; gap: 15px; }
.waffle { width: 16px; height: 16px; margin: 0 9px 0 12px; }
.ava { width: 32px; height: 32px; }
.logo { width: 290px; height: 110px; margin: 99px 0 0 77px; }
.logo text { font: 600 80px Inter, sans-serif; fill: #fff; }
.logo .cg { font-size: 91px; font-weight: 500; }
.logo .cg2 { font-size: 82px; }
.logo .cl { font-size: 84px; }
.search { width: 337px; height: 44px; border-radius: 22px; background: #fff; margin: 31px 0 0 53px; display: flex; align-items: center; padding: 0 21px 0 20px; font: 16px Roboto, sans-serif; color: #75787c; box-shadow: 0 1px 4px rgba(0,0,0,.25); }
.search span { margin-left: 16px; }
.search .mic { width: 14px; height: 20px; margin-left: auto; }
.tiles { display: grid; grid-template-columns: repeat(3, 112px); grid-auto-rows: 112px; margin: 34px 0 0 54px; }
.tile { display: flex; flex-direction: column; align-items: center; font: 13px/16px Roboto, sans-serif; gap: 16px; }
.tile em { width: 48px; height: 48px; border-radius: 24px; background: #f1f3f4; display: flex; align-items: center; justify-content: center; }
.tile em svg { width: 24px; height: 24px; }
.tile .long { margin-right: 10px; }
.bb { font: italic bold 13px "Liberation Sans", sans-serif; fill: #fff; }
.edit { position: absolute; left: 395px; top: 563px; width: 32px; height: 32px; border-radius: 16px; background: #fff; display: flex; align-items: center; justify-content: center; box-shadow: 0 1px 4px rgba(0,0,0,.4); }
.edit svg { width: 14px; height: 14px; }
.sbar { width: 15px; height: 610px; background: #f1f1f1; display: flex; flex-direction: column; align-items: center; }
.sbar svg { width: 15px; height: 15px; }
.sbar div { width: 11px; height: 571px; margin-bottom: 9px; background: #c1c1c1; }
```
FILE: script.js
```js
const NS = 'http://www.w3.org/2000/svg';
function add(parent, tag, attrs, text) {
  const el = document.createElementNS(NS, tag);
  for (const k in attrs) el.setAttribute(k, attrs[k]);
  if (text !== undefined) el.textContent = text;
  parent.appendChild(el);
}
const ticks = document.getElementById('ticks');
const labels = document.getElementById('labels');
const step = 6.343;

// horizontal ruler, tick 10 is the 25 mark
for (let i = 4; i < 83; i++) {
  const x = Math.floor(49 + i * step);
  if (x < 73 || x > 571) continue;
  const h = i % 10 === 0 ? 17 : i % 5 === 0 ? 9 : 5;
  add(ticks, 'rect', { x, y: 116 - h, width: 1, height: h });
  if (i % 10 === 0) add(labels, 'text', { x: x + 2, y: 109 }, String(i * 2.5));
}
// vertical ruler, digits are stacked
for (let i = -1; i < 88; i++) {
  const y = Math.floor(128.2 + i * step);
  if (y > 681) break;
  const w = i % 10 === 0 ? 17 : i % 5 === 0 ? 9 : 5;
  add(ticks, 'rect', { x: 70 - w, y, width: w, height: 1 });
  if (i % 10 === 0) String(i * 2.5).split('').forEach((c, n) => add(labels, 'text', { x: 58, y: y + 10 + n * 9 }, c));
}
const keys = document.getElementById('keys');
[[145, [163, 308, 453]], [290, [199, 344, 490]], [436, [141, 286, 431, 577]], [580, [104, 250, 395, 541]],
 [725, [141, 286, 431, 577]], [871, [159, 304, 449]]]
  .forEach(([x, ys]) => ys.forEach(y => add(keys, 'rect', { x, y, width: 107, height: 106.500 })));
const holes = document.getElementById('holes');
[[634, 77], [343, 163], [967, 117], [1055, 412], [1173, 447], [1020, 508], [1173, 645], [235, 593], [634, 676]]
  .forEach(([cx, cy]) => add(holes, 'circle', { cx, cy, r: 9.500 }));
const colors = ['#000', '#1a1a1a', '#333', '#4d4d4d', '#666', '#808080', '#999', '#b3b3b3', '#ccc', '#e6e6e6', '#ececec', '#f2f2f2', '#f9f9f9', '#fff',
  '#800000', '#f00', '#808000', '#ff0', '#008000', '#0f0', '#008080', '#0ff', '#000080', '#00f', '#800080', '#f0f',
  '#2b0000', '#500', '#800000', '#a00', '#d40000', '#f00', '#ff2a2a', '#f55', '#ff8080', '#faa', '#ffd5d5',
  '#280b0b', '#501616', '#782121', '#a02c2c', '#c83737', '#d35f5f', '#de8787'];
document.getElementById('swatches').innerHTML = colors.map(c => `<span style="background:${c}"></span>`).join('');
```
